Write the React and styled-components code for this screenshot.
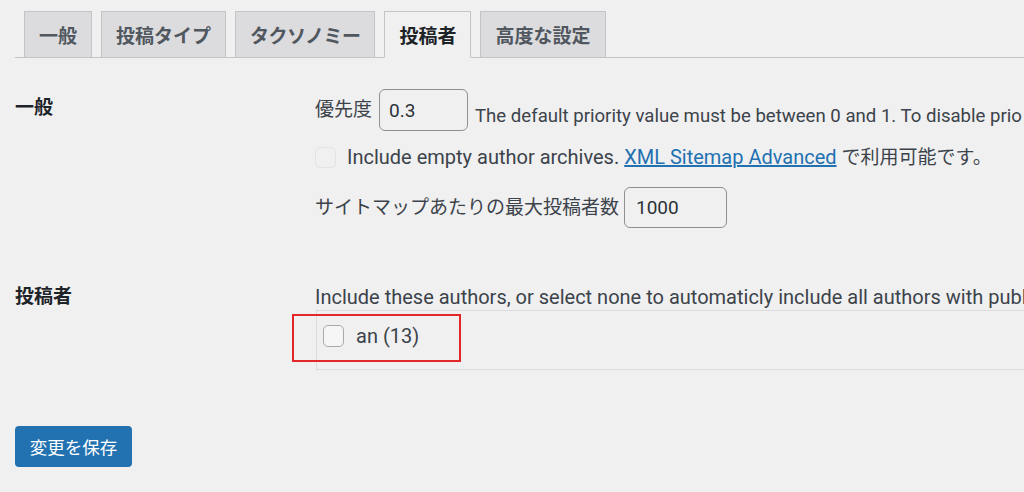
import React from 'react';
import styled, { createGlobalStyle } from 'styled-components';

const GlobalStyle = createGlobalStyle`
    html, body {
        margin: 0;
        padding: 0;
        overflow: hidden;
        background: #f0f0f1;
    }
    body {
        font-family: Roboto, "Noto Sans CJK JP", sans-serif;
        font-size: 20px;
        color: #3c434a;
    }
`;

const Page = styled.div`
    width: 1400px;
    min-height: 492px;
    padding-left: 15px;
    box-sizing: border-box;
`;

const TabNav = styled.nav`
    display: flex;
    align-items: flex-end;
    gap: 9px;
    padding: 11px 0 0 9px;
    border-bottom: 1px solid #c3c4c7;
`;

const Tab = styled.a`
    display: flex;
    align-items: center;
    height: 47px;
    box-sizing: border-box;
    margin-bottom: -1px;
    padding: 0 14px;
    border: 1px solid #c3c4c7;
    background: ${p => (p.$active ? '#f0f0f1' : '#dcdcde')};
    border-bottom-color: ${p => (p.$active ? '#f0f0f1' : '#c3c4c7')};
    color: ${p => (p.$active ? '#1d2327' : '#50575e')};
    font-size: 19px;
    font-weight: 700;
    letter-spacing: ${p => p.$tight || 0}px;
    white-space: nowrap;
`;

const Section = styled.div`
    display: grid;
    grid-template-columns: 300px 1fr;
    align-items: start;
    margin-top: ${p => p.$gap}px;
`;

const Heading = styled.div`
    padding-top: ${p => p.$offset}px;
    font-size: 19px;
    line-height: 24px;
    font-weight: 700;
    color: #1d2327;
`;

const Field = styled.div`
    display: flex;
    flex-direction: column;
`;

const Row = styled.div`
    display: flex;
    align-items: center;
    gap: ${p => p.$gap || 7}px;
    margin-top: ${p => p.$top || 0}px;
    white-space: nowrap;
`;

const Jp = styled.span`
    font-size: 19px;
    line-height: 24px;
`;

const TextInput = styled.div`
    width: ${p => p.$w}px;
    height: ${p => p.$h}px;
    box-sizing: border-box;
    display: flex;
    align-items: center;
    padding-left: ${p => p.$pad}px;
    border: 1px solid #8c8f94;
    border-radius: 6px;
    background: #f0f0f1;
    color: #2c3338;
    font-size: 19px;
`;

const Description = styled.span`
    line-height: 24px;
    font-size: ${p => (p.$small ? '18.6px' : 'inherit')};
    margin-top: ${p => p.$shift || 0}px;
`;

const Link = styled.a`
    color: #2271b1;
    text-decoration: underline;
`;

const Checkbox = styled.span`
    display: inline-block;
    width: 21px;
    height: ${p => p.$h || 21}px;
    box-sizing: border-box;
    border-radius: 5px;
    border: 1px solid ${p => (p.$faint ? '#e4e4e6' : '#a7aaad')};
    background: ${p => (p.$faint ? 'transparent' : '#f6f6f7')};
    flex-shrink: 0;
`;

const AuthorBox = styled.div`
    position: relative;
    margin: 1px 0 0 1px;
    height: 60px;
    box-sizing: border-box;
    border: 1px solid #dcdcde;
    border-right: none;
    padding: 13px 0 0 6px;
`;

const Highlight = styled.div`
    position: absolute;
    left: -25px;
    top: 3px;
    width: 169px;
    height: 48px;
    box-sizing: border-box;
    border: 2px solid #e3262a;
    pointer-events: none;
`;

const Submit = styled.div`
    margin-top: 56px;
`;

const PrimaryButton = styled.button`
    width: 117px;
    height: 41px;
    border: 0;
    border-radius: 4px;
    background: #2271b1;
    color: #ffffff;
    font-family: Roboto, "Noto Sans CJK JP", sans-serif;
    font-size: 17.5px;
    padding: 0;
`;

const tabs = [
    { label: '一般' },
    { label: '投稿タイプ' },
    { label: 'タクソノミー', tight: -0.5 },
    { label: '投稿者', active: true },
    { label: '高度な設定' },
];

export default function App() {
    return (
        <>
            <GlobalStyle />
            <Page>
                <TabNav>
                    {tabs.map(t => (
                        <Tab key={t.label} $active={t.active} $tight={t.tight}>{t.label}</Tab>
                    ))}
                </TabNav>

                <Section $gap={31}>
                    <Heading $offset={7}>一般</Heading>
                    <Field>
                        <Row>
                            <Jp>優先度</Jp>
                            <TextInput $w={89} $h={42} $pad={9}>0.3</TextInput>
                            <Description $small $shift={12}>
                                The default priority value must be between 0 and 1. To disable prio
                            </Description>
                        </Row>
                        <Row $top={14} $gap={11}>
                            <Checkbox $faint />
                            <Description>
                                Include empty author archives. <Link>XML Sitemap Advanced</Link> <Jp>で利用可能です。</Jp>
                            </Description>
                        </Row>
                        <Row $top={17} $gap={5}>
                            <Jp>サイトマップあたりの最大投稿者数</Jp>
                            <TextInput $w={103} $h={41} $pad={11}>1000</TextInput>
                        </Row>
                    </Field>
                </Section>

                <Section $gap={57}>
                    <Heading $offset={0}>投稿者</Heading>
                    <Field>
                        <Description>
                            Include these authors, or select none to automaticly include all authors with publ
                        </Description>
                        <AuthorBox>
                            <Row $gap={12}>
                                <Checkbox $h={22} />
                                <Description>an (13)</Description>
                            </Row>
                            <Highlight />
                        </AuthorBox>
                    </Field>
                </Section>

                <Submit>
                    <PrimaryButton>変更を保存</PrimaryButton>
                </Submit>
            </Page>
        </>
    );
}
